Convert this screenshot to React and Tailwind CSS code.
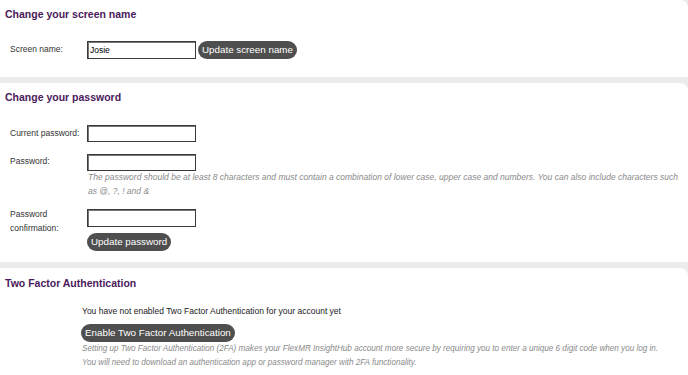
import React from "react";

const Btn = ({ children, className = "" }) => (
  <button
    type="button"
    className={`h-[18px] rounded-full bg-[#4f4f4f] px-[4px] text-[9.8px] leading-[18px] text-white whitespace-nowrap ${className}`}
  >
    {children}
  </button>
);

const Input = ({ value = "", className = "" }) => (
  <input
    readOnly
    value={value}
    className={`w-[109px] h-[17px] border border-[#3a3a3a] bg-white px-[2px] text-[8.5px] text-black outline-none shadow-[inset_1px_1px_0_#777] ${className}`}
  />
);

const Heading = ({ children }) => (
  <h2 className="text-[10.5px] leading-[13px] font-bold text-[#4b1a5c]">{children}</h2>
);

export default function App() {
  return (
    <div className="w-[688px] h-[375px] overflow-hidden bg-[#ececec] flex flex-col gap-[6px] font-['Liberation_Sans',Arial,sans-serif] text-[#333]">
      {/* Screen name */}
      <section className="h-[77px] shrink-0 bg-white rounded-tr-[8px] pl-[5px] pt-[8px]">
        <Heading>Change your screen name</Heading>
        <div className="mt-[20px] flex items-start">
          <label className="w-[82px] pl-[5px] pt-[2px] text-[8.5px] leading-[12px]">Screen name:</label>
          <Input value="Josie" className="h-[18px]" />
          <Btn className="ml-[2px]">Update screen name</Btn>
        </div>
      </section>

      {/* Password */}
      <section className="h-[179px] shrink-0 bg-white rounded-tr-[8px] pl-[5px] pt-[8px]">
        <Heading>Change your password</Heading>
        <div className="mt-[21px] flex items-start">
          <label className="w-[82px] pl-[5px] pt-[2px] text-[8.5px] leading-[12px]">Current password:</label>
          <Input />
        </div>
        <div className="mt-[12px] flex items-start">
          <label className="w-[82px] pl-[5px] pt-[1px] text-[8.5px] leading-[12px]">Password:</label>
          <div className="flex flex-col">
            <Input />
            <p className="w-[594px] pl-[1px] -mt-[1px] text-[8.5px] leading-[14px] italic text-[#8a8a8a]">
              The password should be at least 8 characters and must contain a combination of lower case, upper case and numbers. You can also include characters such as @, ?, ! and &amp;
            </p>
          </div>
        </div>
        <div className="mt-[11px] flex items-start">
          <label className="w-[82px] pl-[5px] -mt-[2px] text-[8.5px] leading-[14px]">
            Password
            <br />
            confirmation:
          </label>
          <div className="flex flex-col items-start">
            <Input className="h-[18px]" />
            <Btn className="mt-[6px]">Update password</Btn>
          </div>
        </div>
      </section>

      {/* 2FA */}
      <section className="flex-1 bg-white rounded-tr-[8px] pl-[5px] pt-[9px]">
        <Heading>Two Factor Authentication</Heading>
        <div className="pl-[77px] mt-[15px]">
          <p className="text-[8.5px] leading-[12px] text-[#222]">
            You have not enabled Two Factor Authentication for your account yet
          </p>
          <Btn className="mt-[7px] -ml-[1px]">Enable Two Factor Authentication</Btn>
          <p className="-mt-[1px] text-[8.15px] leading-[14px] italic text-[#8a8a8a]">
            Setting up Two Factor Authentication (2FA) makes your FlexMR InsightHub account more secure by requiring you to enter a unique 6 digit code when you log in.
            <br />
            You will need to download an authentication app or password manager with 2FA functionality.
          </p>
        </div>
      </section>
    </div>
  );
}
